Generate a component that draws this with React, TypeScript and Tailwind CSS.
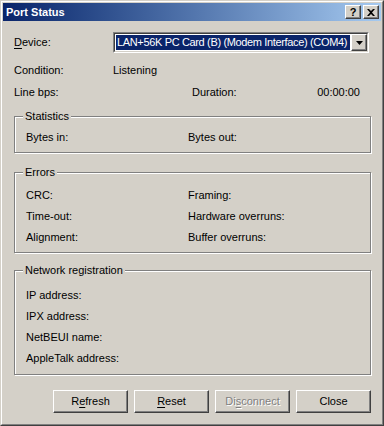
import React from "react";

const raised =
  "border border-t-white border-l-white border-r-[#404040] border-b-[#404040] shadow-[inset_-1px_-1px_0_#808080]";

function U({ children }: { children: React.ReactNode }) {
  return <span className="underline underline-offset-[2px]">{children}</span>;
}

function Group({
  title,
  className,
  children,
}: {
  title: string;
  className?: string;
  children: React.ReactNode;
}) {
  return (
    <div
      className={`relative border border-[#808080] shadow-[inset_1px_1px_0_#fff,1px_1px_0_#fff] ${className ?? ""}`}
    >
      <div className="absolute left-[8px] top-[-8px] bg-[#d4d0c8] px-[2px] leading-[14px]">
        {title}
      </div>
      {children}
    </div>
  );
}

function Row({ a, b }: { a: string; b?: string }) {
  return (
    <div className="flex h-[14px] items-center leading-[14px]">
      <div className="w-[162px]">{a}</div>
      {b && <div>{b}</div>}
    </div>
  );
}

function Btn({
  children,
  disabled,
}: {
  children: React.ReactNode;
  disabled?: boolean;
}) {
  return (
    <div
      className={`flex h-[23px] w-[75px] items-center justify-center bg-[#d4d0c8] ${raised} ${
        disabled ? "text-[#808080] [text-shadow:1px_1px_0_#fff]" : "text-black"
      }`}
    >
      {children}
    </div>
  );
}

export default function App() {
  return (
    <div
      className="h-[426px] w-[384px] overflow-hidden border border-t-[#d4d0c8] border-l-[#d4d0c8] border-r-[#404040] border-b-[#404040] bg-[#d4d0c8] text-[11px] text-black"
      style={{ fontFamily: '"Liberation Sans", Arial, sans-serif' }}
    >
      <div className="h-full border border-t-white border-l-white border-r-[#808080] border-b-[#808080] p-px">
        {/* title bar */}
        <div className="flex h-[18px] items-center bg-linear-to-r from-[#0a246a] to-[#a6caf0] pr-[2px] pl-[3px]">
          <div className="flex-1 font-bold text-white">Port Status</div>
          <div
            className={`flex h-[14px] w-[16px] items-center justify-center bg-[#d4d0c8] text-[11px] leading-none font-bold ${raised}`}
          >
            ?
          </div>
          <div
            className={`ml-[2px] flex h-[14px] w-[16px] items-center justify-center bg-[#d4d0c8] ${raised}`}
          >
            <svg width="8" height="7" viewBox="0 0 8 7">
              <path d="M0 0h2l2 2 2-2h2L5 3.5 8 7H6L4 5 2 7H0l3-3.5z" fill="#000" />
            </svg>
          </div>
        </div>

        <div className="pr-[10px] pl-[11px]">
          {/* device */}
          <div className="mt-[11px] flex h-[21px] items-center">
            <div className="w-[99px]">
              <U>D</U>evice:
            </div>
            <div className="h-[21px] w-[256px] border border-t-[#808080] border-l-[#808080] border-r-white border-b-white">
              <div className="flex h-full border border-t-[#404040] border-l-[#404040] border-r-[#d4d0c8] border-b-[#d4d0c8] bg-white">
                <div className="m-px flex-1 overflow-hidden bg-[#0a246a] pl-[1px] leading-[15px] tracking-[-0.35px] whitespace-nowrap text-white">
                  LAN+56K PC Card (B) (Modem Interface) (COM4)
                </div>
                <div
                  className={`flex h-[17px] w-[16px] shrink-0 items-center justify-center bg-[#d4d0c8] ${raised}`}
                >
                  <svg width="7" height="4" viewBox="0 0 7 4">
                    <path d="M0 0h7L3.5 4z" fill="#000" />
                  </svg>
                </div>
              </div>
            </div>
          </div>

          <div className="mt-[10px] flex h-[14px] items-center leading-[14px]">
            <div className="w-[99px]">Condition:</div>
            <div>Listening</div>
          </div>

          <div className="mt-[8px] flex h-[14px] items-center leading-[14px]">
            <div className="w-[178px]">Line bps:</div>
            <div className="flex-1">Duration:</div>
            <div className="pr-[11px]">00:00:00</div>
          </div>

          <Group title="Statistics" className="mt-[17px] pt-[13px] pb-[8px] pl-[11px]">
            <Row a="Bytes in:" b="Bytes out:" />
          </Group>

          <Group
            title="Errors"
            className="mt-[19px] flex flex-col gap-[7px] pt-[15px] pb-[8px] pl-[11px]"
          >
            <Row a="CRC:" b="Framing:" />
            <Row a="Time-out:" b="Hardware overruns:" />
            <Row a="Alignment:" b="Buffer overruns:" />
          </Group>

          <Group
            title="Network registration"
            className="mt-[17px] flex flex-col gap-[7px] pt-[17px] pb-[9px] pl-[11px]"
          >
            <Row a="IP address:" />
            <Row a="IPX address:" />
            <Row a="NetBEUI name:" />
            <Row a="AppleTalk address:" />
          </Group>

          <div className="mt-[15px] flex justify-end gap-[6px]">
            <Btn>
              R<U>e</U>fresh
            </Btn>
            <Btn>
              <U>R</U>eset
            </Btn>
            <Btn disabled>
              Di<U>s</U>connect
            </Btn>
            <Btn>Close</Btn>
          </div>
        </div>
      </div>
    </div>
  );
}
